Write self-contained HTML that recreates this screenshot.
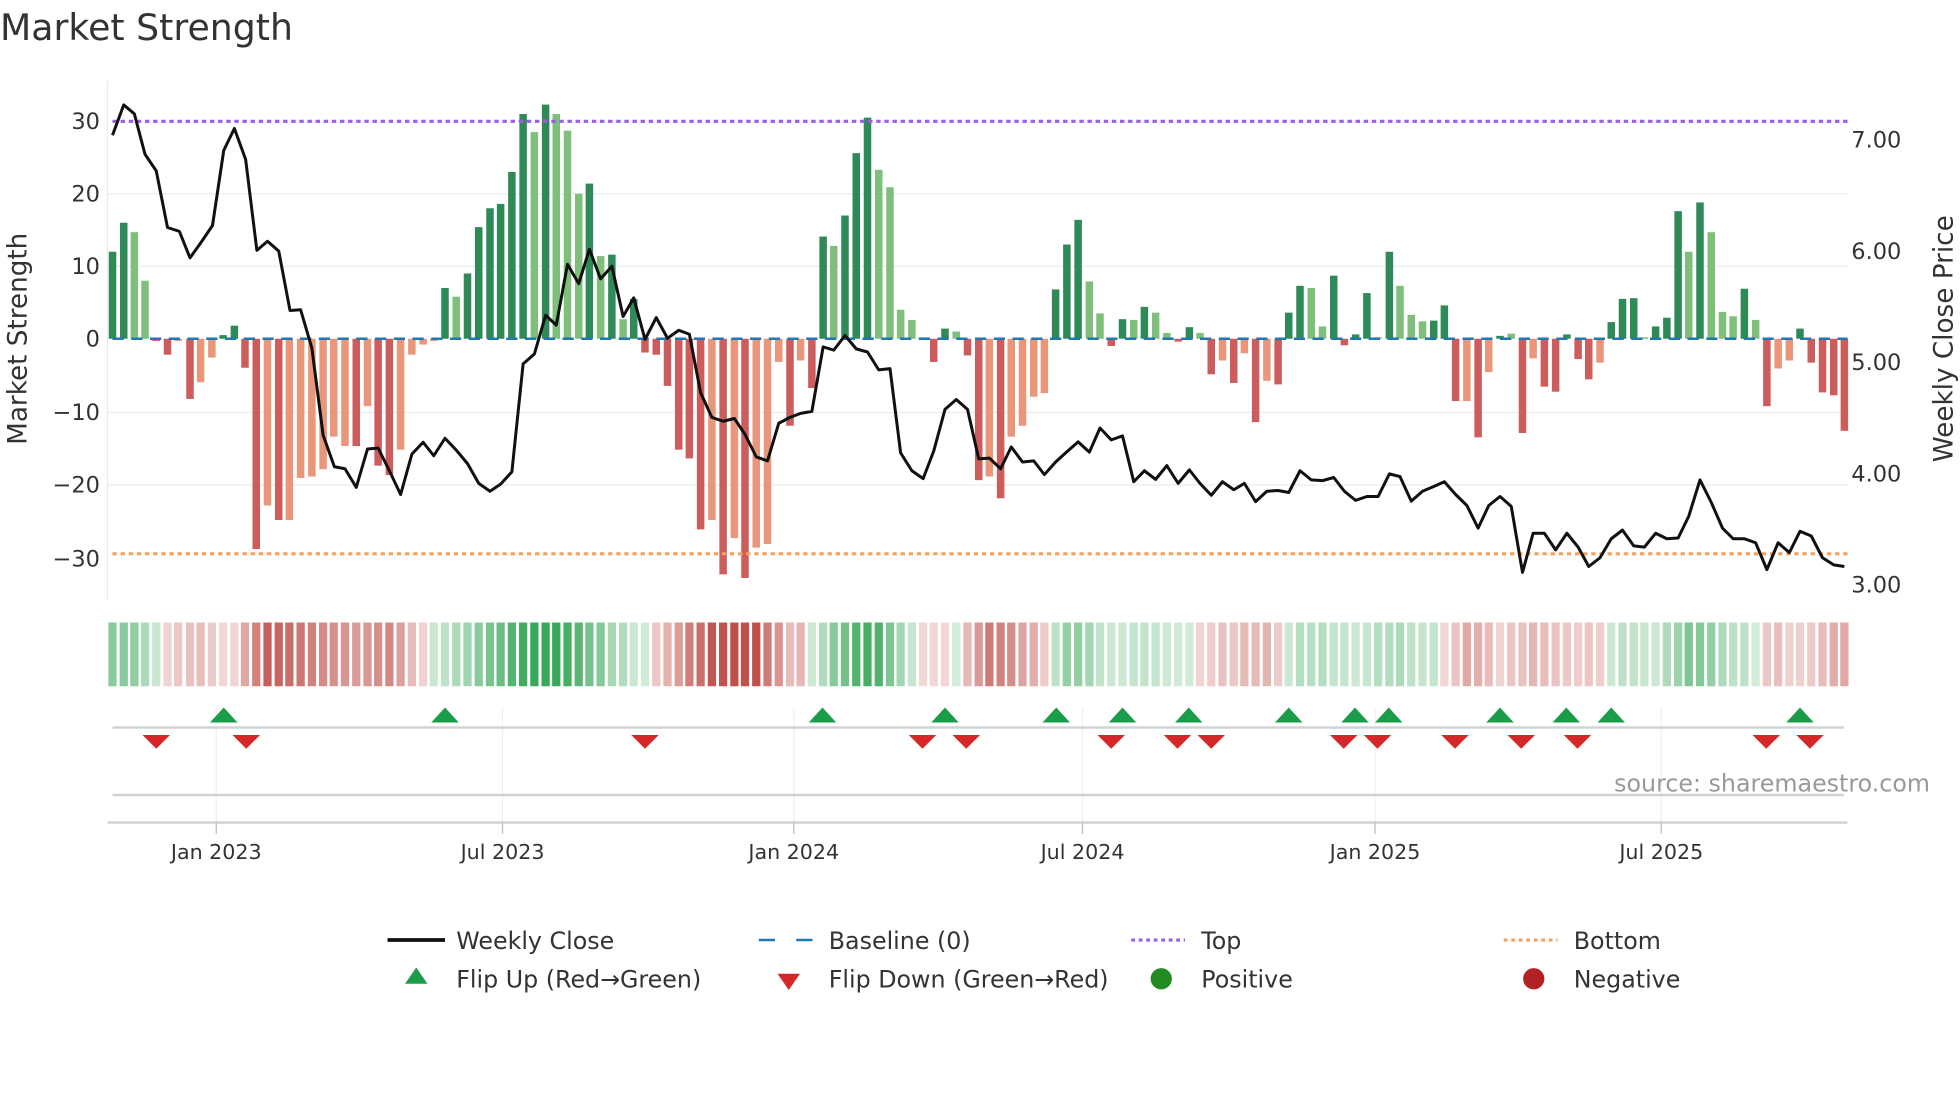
<!DOCTYPE html>
<html><head><meta charset="utf-8"><style>
html,body{margin:0;padding:0;background:#fff;width:1960px;height:1102px;overflow:hidden}
svg{display:block}
text{font-family:"DejaVu Sans","Liberation Sans",sans-serif;fill:#333}
</style></head><body>
<svg id="s" width="1960" height="1102" viewBox="0 0 1568 881.6" xmlns="http://www.w3.org/2000/svg">
<text x="0" y="32" font-size="29">Market Strength</text>
<g stroke="#ececec" stroke-width="1">
<line x1="86" y1="155" x2="1478" y2="155"/><line x1="86" y1="213" x2="1478" y2="213"/>
<line x1="86" y1="330" x2="1478" y2="330"/><line x1="86" y1="388" x2="1478" y2="388"/>
<line x1="86" y1="65" x2="86" y2="480"/>
</g>
<g font-size="18" text-anchor="end">
<text x="80" y="103">30</text><text x="80" y="161">20</text><text x="80" y="219">10</text><text x="80" y="277">0</text>
<text x="80" y="336">−10</text><text x="80" y="394">−20</text><text x="80" y="453">−30</text>
</g>
<g font-size="18">
<text x="1481" y="118">7.00</text><text x="1481" y="207">6.00</text><text x="1481" y="296">5.00</text><text x="1481" y="385">4.00</text><text x="1481" y="474">3.00</text>
</g>
<text transform="translate(21,271) rotate(-90)" font-size="21" text-anchor="middle">Market Strength</text>
<text transform="translate(1562,271) rotate(-90)" font-size="21" text-anchor="middle">Weekly Close Price</text>
<g id="bars"></g>
<line x1="90" y1="271" x2="1478" y2="271" stroke="#1f77b4" stroke-width="2" stroke-dasharray="9,6"/>
<line x1="90" y1="97" x2="1478" y2="97" stroke="#9b5de5" stroke-width="2.5" stroke-dasharray="3.5,3"/>
<line x1="90" y1="443" x2="1478" y2="443" stroke="#f4a261" stroke-width="2.5" stroke-dasharray="3.5,3"/>
<polyline id="pl" fill="none" stroke="#111" stroke-width="2.4" stroke-linejoin="round"/>
<g id="heat"></g>
<g stroke="#eef0f2" stroke-width="1">
<line x1="173" y1="566" x2="173" y2="658"/><line x1="402" y1="566" x2="402" y2="658"/><line x1="635" y1="566" x2="635" y2="658"/>
<line x1="866" y1="566" x2="866" y2="658"/><line x1="1100" y1="566" x2="1100" y2="658"/><line x1="1329" y1="566" x2="1329" y2="658"/>
</g>
<line x1="90" y1="582" x2="1475" y2="582" stroke="#d0d3d6" stroke-width="2"/>
<line x1="90" y1="636" x2="1475" y2="636" stroke="#d0d3d6" stroke-width="2"/>
<line x1="86" y1="658" x2="1478" y2="658" stroke="#d0d3d6" stroke-width="2"/>
<g stroke="#bbb" stroke-width="1">
<line x1="173" y1="658" x2="173" y2="667"/><line x1="402" y1="658" x2="402" y2="667"/><line x1="635" y1="658" x2="635" y2="667"/>
<line x1="866" y1="658" x2="866" y2="667"/><line x1="1100" y1="658" x2="1100" y2="667"/><line x1="1329" y1="658" x2="1329" y2="667"/>
</g>
<g id="flips"></g>
<text x="1544" y="633" font-size="19" text-anchor="end" style="fill:#999">source: sharemaestro.com</text>
<g font-size="16.5" text-anchor="middle">
<text x="173" y="687">Jan 2023</text><text x="402" y="687">Jul 2023</text><text x="635" y="687">Jan 2024</text>
<text x="866" y="687">Jul 2024</text><text x="1100" y="687">Jan 2025</text><text x="1329" y="687">Jul 2025</text>
</g>
<g font-size="19">
<line x1="310" y1="752" x2="356" y2="752" stroke="#111" stroke-width="3"/><text x="365" y="759">Weekly Close</text>
<line x1="607" y1="752" x2="650" y2="752" stroke="#1f77b4" stroke-width="2" stroke-dasharray="13,17"/><text x="663" y="759">Baseline (0)</text>
<line x1="905" y1="752" x2="948" y2="752" stroke="#9b5de5" stroke-width="2.5" stroke-dasharray="3,3"/><text x="961" y="759">Top</text>
<line x1="1203" y1="752" x2="1246" y2="752" stroke="#f4a261" stroke-width="2.5" stroke-dasharray="3,3"/><text x="1259" y="759">Bottom</text>
<path d="M333 774 L342 787 L324 787 Z" fill="#1a9c48"/><text x="365" y="790">Flip Up (Red→Green)</text>
<path d="M622 779 L640 779 L631 792 Z" fill="#d62728"/><text x="663" y="790">Flip Down (Green→Red)</text>
<circle cx="929" cy="783" r="8.5" fill="#228b22"/><text x="961" y="790">Positive</text>
<circle cx="1227" cy="783" r="8.5" fill="#b22222"/><text x="1259" y="790">Negative</text>
</g>
</svg>
<script>
var NS="http://www.w3.org/2000/svg";
function el(t,a,p){var e=document.createElementNS(NS,t);for(var k in a)e.setAttribute(k,a[k]);p.appendChild(e);return e;}
var b1=[[180,12,1],[198,16,1],[215,14.7,0],[232,8,0],[250,-0.3,1],[268,-2.2,1],[285,-0.3,0],[304,-8.3,1],[321,-6,0],[339,-2.6,0],[357,0.5,1],[375,1.8,1],[392,-4,1],[410,-29,1],[428,-23,0],[446,-25,1],[463,-25,0],[481,-19.2,0],[499,-19,0],[517,-18,0],[534,-13.5,0],[552,-14.8,0],[570,-14.8,1],[588,-9.3,0],[605,-17.5,1],[623,-18.8,1],[641,-15.3,0],[659,-2.2,0],[677,-0.8,0],[694,-0.3,0],[712,7,1],[730,5.8,0],[748,9,1],[766,15.4,1],[784,18,1],[801,18.6,1],[819,23,1],[837,31,1],[855,28.5,0],[873,32.3,1],[890,31,0],[908,28.7,0],[926,20,0],[943,21.4,1],[961,11.4,0],[979,11.6,1],[997,2.7,0],[1014,5.5,1],[1032,-1.9,1],[1050,-2.2,1],[1068,-6.5,1],[1086,-15.3,1],[1103,-16.5,1],[1121,-26.3,1],[1139,-25,0],[1157,-32.5,1],[1175,-27.5,0],[1192,-33,1],[1210,-28.8,0],[1228,-28.3,0],[1246,-3.2,0],[1264,-12,1],[1281,-3,0],[1299,-6.8,1],[1317,14.1,1],[1334,12.8,0],[1352,17,1],[1370,25.6,1],[1388,30.5,1],[1406,23.3,0],[1424,20.9,0],[1441,4,0],[1459,2.6,0],[1477,0.2,0],[1494,-3.2,1],[1512,1.4,1],[1530,1,0],[1548,-2.3,1],[1566,-19.5,1]];
var b2=[[15,-19,0],[33,-22,1],[50,-13.5,0],[68,-12,0],[86,-8,0],[103,-7.5,0],[121,6.8,1],[139,13,1],[157,16.4,1],[175,7.9,0],[192,3.5,0],[210,-1,1],[228,2.7,1],[246,2.6,0],[263,4.4,1],[281,3.6,0],[299,0.8,0],[317,-0.4,1],[335,1.6,1],[352,0.8,0],[370,-4.9,1],[388,-3,0],[406,-6.1,1],[423,-2,0],[441,-11.5,1],[459,-5.8,0],[477,-6.3,1],[494,3.6,1],[512,7.3,1],[530,7,0],[548,1.7,0],[566,8.7,1],[583,-0.9,1],[601,0.6,1],[619,6.3,1],[637,0.2,0],[655,12,1],[672,7.3,0],[690,3.3,0],[708,2.4,0],[726,2.5,1],[743,4.6,1],[761,-8.6,1],[779,-8.6,0],[797,-13.6,1],[814,-4.6,0],[832,0.4,1],[850,0.7,0],[868,-13,1],[885,-2.7,0],[903,-6.6,1],[921,-7.3,1],[939,0.6,1],[957,-2.8,1],[974,-5.6,1],[992,-3.3,0],[1010,2.3,1],[1028,5.5,1],[1046,5.6,1],[1063,0.2,0],[1081,1.7,1],[1099,2.9,1],[1117,17.6,1],[1134,12,0],[1152,18.8,1],[1170,14.7,0],[1188,3.7,0],[1205,3.1,0],[1223,6.9,1],[1241,2.6,0],[1259,-9.3,1],[1277,-4.1,0],[1295,-3,0],[1312,1.4,1],[1330,-3.3,1],[1348,-7.4,1],[1366,-7.8,1],[1383,-12.7,1]];
var bars=b1.map(function(b){return [b[0]/2,b[1],b[2]]}).concat(b2.map(function(b){return [784+b[0]/2,b[1],b[2]]}));
var g=document.getElementById("bars"),h=document.getElementById("heat");
var U=5.8;
bars.forEach(function(b,i){
 var x=b[0],v=b[1],c=v>=0?(b[2]?"#2e8b57":"#7fbf7b"):(b[2]?"#cd5c5c":"#e9967a");
 var y=v>=0?271-v*U:271,hh=Math.abs(v)*U;
 el("rect",{x:x-3,y:y,width:6,height:Math.max(hh,0.5),fill:c},g);
 var s=0,n=0;for(var k=i-1;k<=i+1;k++){if(bars[k]){s+=bars[k][1];n++;}}s/=n;
 var a=Math.min(1,0.22+Math.abs(s)/28*0.75);
 el("rect",{x:x-3.3,y:498,width:6.6,height:51,fill:s>=0?"#3aa85a":"#c0504a","fill-opacity":a},h);
});
var l1=[[180,342],[198,265],[215,288],[232,390],[250,432],[268,575],[287,585],[304,652],[322,612],[340,570],[358,380],[375,325],[393,403],[411,633],[428,610],[446,635],[464,785],[481,783],[499,880],[517,1100],[535,1180],[552,1185],[570,1232],[588,1135],[605,1133],[623,1190],[641,1250],[659,1148],[677,1118],[694,1152],[712,1108],[730,1138],[748,1172],[766,1222],[784,1242],[801,1224],[819,1193],[837,920],[855,895],[873,797],[890,822],[908,668],[926,717],[943,630],[961,705],[979,673],[997,800],[1014,753],[1032,858],[1050,803],[1068,855],[1086,835],[1103,845],[1121,993],[1139,1055],[1157,1065],[1175,1058],[1192,1098],[1210,1155],[1228,1165],[1246,1070],[1264,1055],[1281,1045],[1299,1040],[1317,877],[1334,885],[1352,848],[1370,882],[1388,890],[1406,935],[1424,932],[1441,1145],[1459,1190],[1477,1210],[1494,1140],[1512,1035],[1530,1010],[1548,1035],[1566,1160]];
var l2=[[15,1158],[33,1185],[50,1130],[68,1168],[86,1165],[103,1200],[121,1168],[139,1142],[157,1117],[175,1143],[192,1082],[210,1112],[228,1102],[246,1218],[263,1190],[281,1212],[299,1177],[317,1222],[335,1188],[352,1222],[370,1252],[388,1218],[406,1238],[423,1222],[441,1268],[459,1242],[477,1240],[494,1245],[512,1190],[530,1213],[548,1215],[566,1207],[583,1242],[601,1265],[619,1255],[637,1255],[655,1198],[672,1205],[690,1267],[708,1242],[726,1230],[743,1218],[761,1250],[779,1278],[797,1335],[814,1278],[832,1255],[850,1280],[868,1447],[885,1348],[903,1348],[921,1390],[939,1348],[957,1383],[974,1432],[992,1410],[1010,1362],[1028,1340],[1046,1380],[1063,1383],[1081,1348],[1099,1362],[1117,1360],[1134,1305],[1152,1213],[1170,1270],[1188,1335],[1205,1362],[1223,1362],[1241,1372],[1259,1440],[1277,1372],[1295,1397],[1312,1343],[1330,1355],[1348,1410],[1366,1428],[1383,1432]];
var pts=l1.map(function(p){return (p[0]/2)+","+(p[1]/3.16).toFixed(1)}).concat(l2.map(function(p){return (784+p[0]/2)+","+(p[1]/3.16).toFixed(1)}));
document.getElementById("pl").setAttribute("points",pts.join(" "));
var f=document.getElementById("flips");
[179,356,658,756,845,898,951,1031,1084,1111,1200,1253,1289,1440].forEach(function(x){el("path",{d:"M"+x+" 566 L"+(x+11)+" 578 L"+(x-11)+" 578 Z",fill:"#1a9c48"},f);});
[125,197,516,738,773,889,942,969,1075,1102,1164,1217,1262,1413,1448].forEach(function(x){el("path",{d:"M"+(x-11)+" 588 L"+(x+11)+" 588 L"+x+" 599 Z",fill:"#d62728"},f);});
</script>
</body></html>
